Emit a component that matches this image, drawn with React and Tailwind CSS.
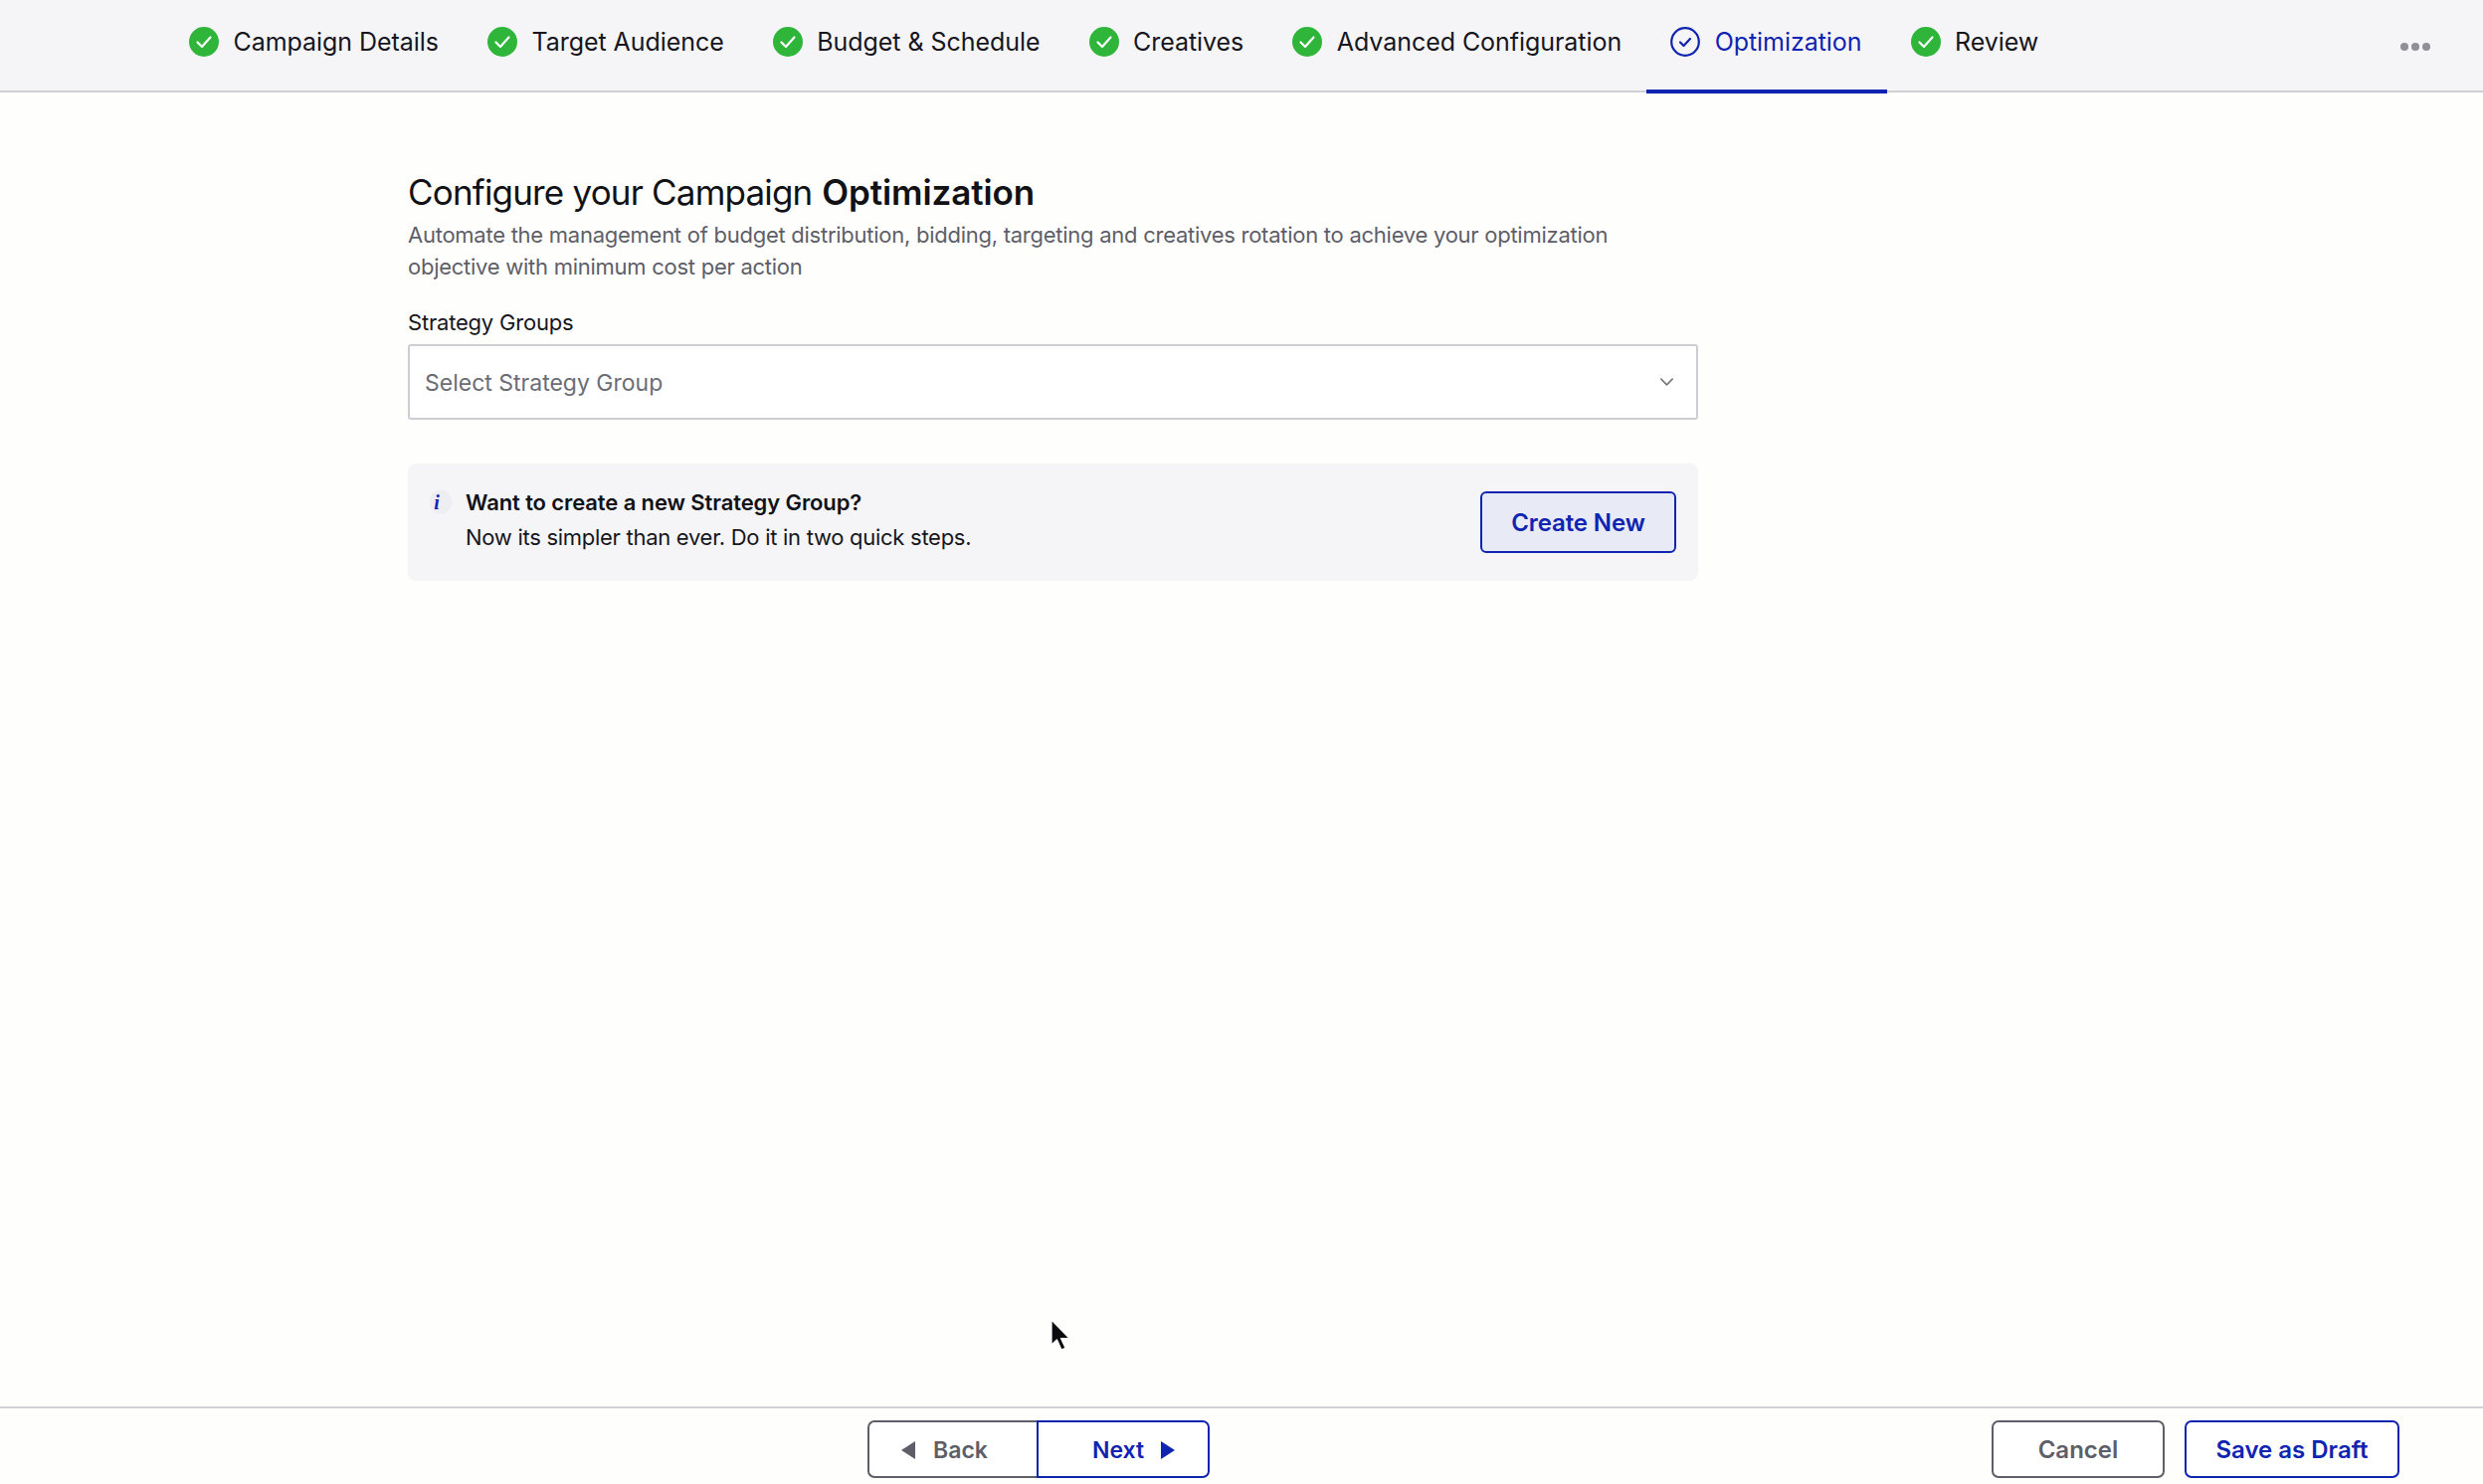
import React from 'react';

const TABS = [
  { label: 'Campaign Details' },
  { label: 'Target Audience' },
  { label: 'Budget & Schedule' },
  { label: 'Creatives' },
  { label: 'Advanced Configuration' },
  { label: 'Optimization', active: true },
  { label: 'Review' },
];

function DoneIcon() {
  return (
    <svg className="w-[30px] h-[30px] shrink-0" viewBox="0 0 30 30">
      <circle cx="15" cy="15" r="15" fill="#2fb53a" />
      <path d="M8.5 15.5l4.5 4.5 8.5-9.5" fill="none" stroke="#fff" strokeWidth="2.2" strokeLinecap="round" strokeLinejoin="round" />
    </svg>
  );
}

function ActiveIcon() {
  return (
    <svg className="w-[30px] h-[30px] shrink-0" viewBox="0 0 30 30">
      <circle cx="15" cy="15" r="13.8" fill="none" stroke="#0f24b0" strokeWidth="2.2" />
      <path d="M10 15.5l3.5 3.5 6.5-7" fill="none" stroke="#0f24b0" strokeWidth="2.2" strokeLinecap="round" strokeLinejoin="round" />
    </svg>
  );
}

function Tab({ tab }) {
  return (
    <div className={`relative h-[93px] flex items-center gap-[14.5px] pl-[24px] pr-[25px] pb-[9px] ${tab.active ? 'text-[#0f24b0]' : 'text-[#16161c]'}`}>
      {tab.active ? <ActiveIcon /> : <DoneIcon />}
      <span className="text-[25px] leading-[36px] tracking-[-0.05px] whitespace-nowrap">{tab.label}</span>
      {tab.active && <div className="absolute left-0 right-0 bottom-[-1px] h-[4px] bg-[#0f24b0]" />}
    </div>
  );
}

function Triangle({ dir, color }) {
  return (
    <svg className="w-[16px] h-[20px] shrink-0" viewBox="0 0 16 20">
      <path d={dir === 'left' ? 'M15 1v18L1 10z' : 'M1 1v18l14-9z'} fill={color} />
    </svg>
  );
}

export default function App() {
  return (
    <div className="h-[1492px] w-[2496px] relative flex flex-col overflow-hidden bg-[#fefefd] font-['Inter',sans-serif]">
      {/* Steps */}
      <div className="h-[93px] shrink-0 bg-[#f5f5f8] border-b-[2px] border-[#cfcfd6] flex items-start pl-[166px] pr-[53px]">
        {TABS.map(t => <Tab key={t.label} tab={t} />)}
        <div className="ml-auto h-[90px] flex items-center gap-[3px] pt-[3px]">
          <span className="w-[8px] h-[8px] rounded-full bg-[#8f8f98]" />
          <span className="w-[8px] h-[8px] rounded-full bg-[#8f8f98]" />
          <span className="w-[8px] h-[8px] rounded-full bg-[#8f8f98]" />
        </div>
      </div>

      {/* Form */}
      <div className="flex-1 pl-[410px] pt-[78px]">
        <div className="w-[1297px]">
          <h1 className="text-[35px] leading-[44px] text-[#111116] font-normal">
            <span className="tracking-[-0.82px]">Configure your Campaign</span> <span className="font-semibold tracking-[-0.1px]">Optimization</span>
          </h1>
          <p className="mt-[5px] text-[22px] leading-[32px] tracking-[-0.26px] text-[#5e5e68]">
            Automate the management of budget distribution, bidding, targeting and creatives rotation to achieve your optimization objective with minimum cost per action
          </p>
          <div className="mt-[24px] text-[22px] leading-[32px] tracking-[-0.2px] text-[#16161c]">Strategy Groups</div>
          <div className="mt-[6px] h-[76px] rounded-[3px] border-[2px] border-[#cdcdd4] bg-white flex items-center justify-between pl-[15px] pr-[22px]">
            <span className="text-[23px] pt-[2px] text-[#6c6c75]">Select Strategy Group</span>
            <svg className="w-[15px] h-[10px]" viewBox="0 0 16 10">
              <path d="M2 2l6 6 6-6" fill="none" stroke="#77777f" strokeWidth="1.8" strokeLinecap="round" strokeLinejoin="round" />
            </svg>
          </div>
          <div className="mt-[44px] h-[118px] rounded-[8px] bg-[#f5f5f8] flex items-center pl-[22px] pr-[22px]">
            <div className="self-start mt-[27px] w-[22px] h-[24px] rounded-full bg-[#ededf3] flex items-center justify-center pr-[8px] font-['Liberation_Serif',serif] italic font-bold text-[20px] leading-none text-[#0f24b0]">i</div>
            <div className="ml-[14px] flex-1 pb-[5px]">
              <div className="text-[22px] leading-[32px] font-semibold tracking-[-0.1px] text-[#111116]">Want to create a new Strategy Group?</div>
              <div className="mt-[3px] text-[22px] leading-[32px] tracking-[-0.28px] text-[#16161c]">Now its simpler than ever. Do it in two quick steps.</div>
            </div>
            <button className="w-[197px] h-[62px] rounded-[6px] border-[2px] border-[#0f24b0] bg-[#e8eaf6] pt-[2px] text-[24px] font-semibold tracking-[-0.1px] text-[#0f24b0]">Create New</button>
          </div>
        </div>
      </div>

      {/* Footer */}
      <div className="h-[78px] shrink-0 border-t-[2px] border-[#d2d2da] flex items-start pt-[12px] pl-[872px] pr-[84px]">
        <div className="flex">
          <button className="w-[170px] h-[58px] rounded-l-[7px] border-[2px] border-r-0 border-[#5e5e68] bg-white flex items-center justify-center gap-[17px] pr-[18px] pt-[2px] text-[23px] font-semibold text-[#5e5e68]">
            <Triangle dir="left" color="#5e5e68" />
            Back
          </button>
          <button className="w-[174px] h-[58px] rounded-r-[7px] border-[2px] border-[#0f24b0] bg-white flex items-center justify-center gap-[16px] pl-[22px] pt-[2px] text-[23px] font-semibold text-[#0f24b0]">
            Next
            <Triangle dir="right" color="#0f24b0" />
          </button>
        </div>
        <div className="ml-auto flex gap-[20px]">
          <button className="w-[174px] h-[58px] rounded-[7px] border-[2px] border-[#5e5e68] bg-white pt-[2px] text-[24px] font-semibold text-[#5e5e68]">Cancel</button>
          <button className="w-[216px] h-[58px] rounded-[7px] border-[2px] border-[#0f24b0] bg-white pt-[2px] text-[24px] font-semibold text-[#0f24b0]">Save as Draft</button>
        </div>
      </div>

      {/* Mouse pointer */}
      <svg className="absolute left-[1054px] top-[1324px] w-[24px] h-[36px]" viewBox="0 0 24 36">
        <path d="M3 3v25l5.5-5 4.5 10 4-1.7-4.5-9.8h8.5z" fill="#0b0b0f" stroke="#fff" strokeWidth="1.2" strokeLinejoin="round" />
      </svg>
    </div>
  );
}
